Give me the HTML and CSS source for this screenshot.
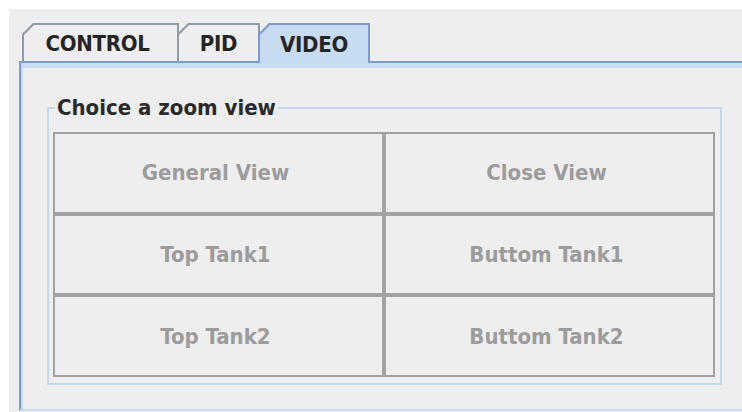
FILE: index.html
```html
<!DOCTYPE html>
<html lang="en">
<head>
<meta charset="utf-8">
<title>Zoom view</title>
<link rel="stylesheet" href="styles.css">
</head>
<body>
<div class="window">
  <div class="tabpane">
    <div class="tabs">
      <div class="tab tab-control"><div class="face">CONTROL</div></div>
      <div class="tab tab-pid"><div class="face">PID</div></div>
      <div class="tab tab-video selected"><div class="face">VIDEO</div></div>
    </div>
    <div class="content">
      <fieldset class="group">
        <legend class="group-title">Choice a zoom view</legend>
        <div class="view-grid">
          <button type="button" class="view-btn" disabled>General View</button>
          <button type="button" class="view-btn" disabled>Close View</button>
          <button type="button" class="view-btn" disabled>Top Tank1</button>
          <button type="button" class="view-btn" disabled>Buttom Tank1</button>
          <button type="button" class="view-btn" disabled>Top Tank2</button>
          <button type="button" class="view-btn" disabled>Buttom Tank2</button>
        </div>
      </fieldset>
    </div>
  </div>
</div>
</body>
</html>
```
FILE: styles.css
```css
html, body {
  margin: 0;
  padding: 0;
  background: #ffffff;
  overflow: hidden;
}

body {
  width: 742px;
  height: 412px;
  font-family: "DejaVu Sans Condensed", "DejaVu Sans", "Liberation Sans", sans-serif;
  font-weight: bold;
  font-size: 22px;
}

/* grey frame of the window */
.window {
  margin: 9px 0 0 9px;
  height: 403px;
  background: #eeeeee;
  padding: 14px 0 0 10px;
  box-sizing: border-box;
}

.tabpane {
  display: flex;
  flex-direction: column;
  width: 723px;
}

/* tab strip */
.tabs {
  display: flex;
  height: 38px;
  padding-left: 3px;
}

.tab {
  position: relative;
  height: 38px;
  box-sizing: border-box;
  padding: 2px 2px 0 2px;
  background: #8f9bab;
  clip-path: polygon(0 11px, 11px 0, 100% 0, 100% 100%, 0 100%);
}

.tab .face {
  height: 100%;
  background: #eeeeee;
  color: #252525;
  display: flex;
  align-items: center;
  justify-content: center;
  clip-path: polygon(0 10px, 10px 0, 100% 0, 100% 100%, 0 100%);
  letter-spacing: -0.3px;
}

.tab-control { width: 157px; }
.tab-control .face { padding-right: 6px; }
.tab-pid { width: 83px; margin-left: -2px; }
.tab-video { width: 112px; margin-left: -2px; }

.tab.selected {
  z-index: 2;
  background: #7d9ad3;
  height: 40px;
  margin-bottom: -2px;
}

.tab.selected .face {
  background: #c8dcf1;
}

/* content area under the tabs */
.content {
  border-top: 2px solid #7d9ad3;
  border-left: 2px solid #7d9ad3;
  border-bottom: 2px solid #c8dcf1;
  box-shadow: inset 0 5px 0 #c8dcf1, inset 2px 0 0 #c8dcf1;
  padding: 33px 20px 24px 26px;
}

/* titled group box */
.group {
  margin: 0;
  border: 2px solid #c4d7ee;
  padding: 13px 5px 6px 4px;
  min-width: 0;
}

.group-title {
  margin-left: 2px;
  padding: 0 2px;
  line-height: 23px;
  color: #2a2a2a;
}

.view-grid {
  display: grid;
  grid-template-columns: 1fr 1fr;
  grid-template-rows: repeat(3, 1fr);
  height: 245px;
}

.view-btn {
  margin: 0;
  padding: 0 6px 0 0;
  border: 2px solid #a2a2a2;
  background: #eeeeee;
  color: #9c9c9c;
  font: inherit;
}
```
